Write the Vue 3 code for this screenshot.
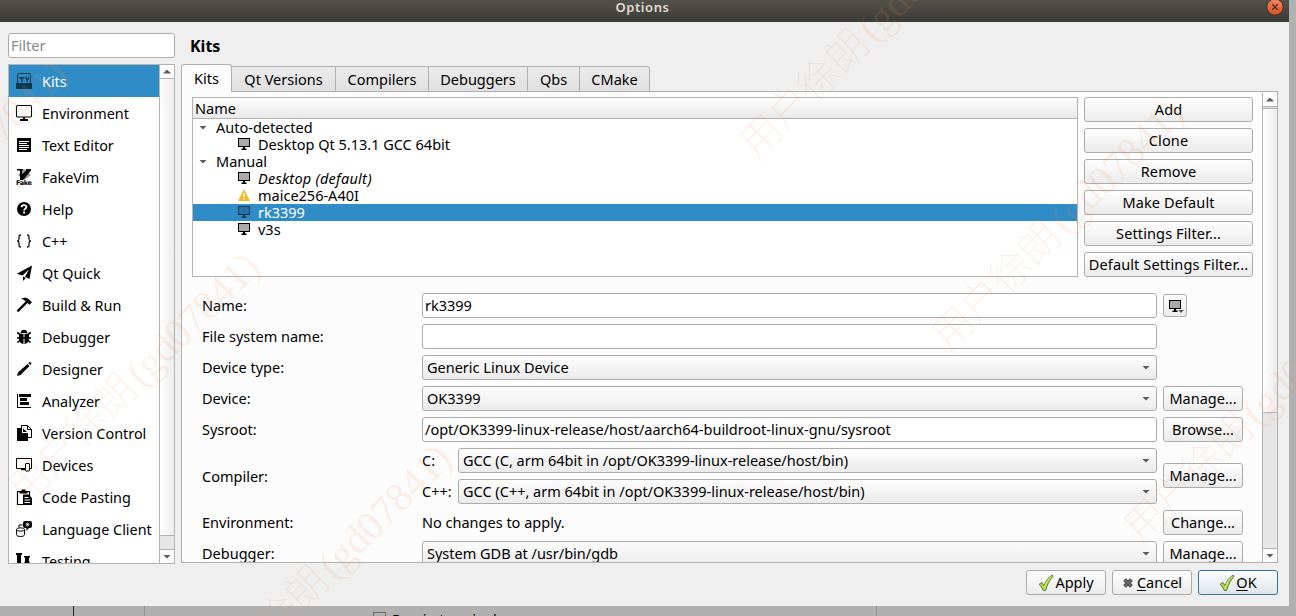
<template>
  <div class="desk">
    <div class="win">
      <header class="title">
        <span>Options</span>
        <svg class="close" width="18" height="18" viewBox="0 0 18 18">
          <defs>
            <linearGradient id="cg" x1="0" y1="0" x2="0" y2="1">
              <stop offset="0" stop-color="#f58463" /><stop offset="1" stop-color="#e2501f" />
            </linearGradient>
          </defs>
          <circle cx="9" cy="9" r="8.2" fill="url(#cg)" stroke="#33312c" />
          <path d="M6.3 6.3l5.4 5.4M11.7 6.3l-5.4 5.4" stroke="#40342c" stroke-width="1.3" />
        </svg>
      </header>

      <div class="body">
        <aside class="side">
          <div class="edit filter">Filter</div>
          <div class="list">
            <ul>
              <li v-for="c in cats" :key="c.t" :class="{ on: c.t === 'Kits' }">
                <svg width="16" height="16" viewBox="0 0 16 16" v-html="c.i"></svg>
                <span>{{ c.t }}</span>
              </li>
            </ul>
            <div class="sbar">
              <div class="sb-btn"><i class="up"></i></div>
              <div class="sb-handle"></div>
              <div class="sb-track short"></div>
              <div class="sb-btn end"><i class="down"></i></div>
            </div>
          </div>
        </aside>

        <section class="page">
          <h1>Kits</h1>
          <nav class="tabs">
            <div v-for="(t, n) in tabs" :key="t" :class="['tab', 't' + n]">{{ t }}</div>
          </nav>
          <div class="pane">
            <div class="scroll">
              <div class="top">
                <div class="tree">
                  <div class="th">Name</div>
                  <div v-for="r in rows" :key="r.t" :class="['row', r.k, { on: r.on }]">
                    <i v-if="r.k === 'group'" class="down"></i>
                    <svg v-else-if="r.k === 'warn'" width="12" height="12" viewBox="0 0 12 12">
                      <path d="M6 0L12 12H0z" fill="#f0bd28" />
                      <path d="M6 4v4M6 9.2v1.2" stroke="#fff" stroke-width="1.4" />
                    </svg>
                    <svg v-else width="12" height="12" viewBox="0 0 12 12" v-html="r.on ? monOn : mon"></svg>
                    <span>{{ r.t }}</span>
                  </div>
                </div>
                <div class="btns">
                  <div v-for="b in btns" :key="b" class="btn">{{ b }}</div>
                </div>
              </div>

              <div class="form">
                <label>Name:</label>
                <div class="edit">rk3399</div>
                <div class="btn pick">
                  <svg width="12" height="12" viewBox="0 0 12 12" v-html="mon"></svg>
                  <i class="down small"></i>
                </div>

                <label>File system name:</label>
                <div class="edit"></div>
                <div></div>

                <label>Device type:</label>
                <div class="combo">Generic Linux Device<i class="down"></i></div>
                <div></div>

                <label>Device:</label>
                <div class="combo">OK3399<i class="down"></i></div>
                <div class="btn">Manage...</div>

                <label>Sysroot:</label>
                <div class="edit path">/opt/OK3399-linux-release/host/aarch64-buildroot-linux-gnu/sysroot</div>
                <div class="btn">Browse...</div>

                <label>Compiler:</label>
                <div class="pair">
                  <span>C:</span>
                  <div class="combo">GCC (C, arm 64bit in /opt/OK3399-linux-release/host/bin)<i class="down"></i></div>
                  <span>C++:</span>
                  <div class="combo">GCC (C++, arm 64bit in /opt/OK3399-linux-release/host/bin)<i class="down"></i></div>
                </div>
                <div class="btn mid">Manage...</div>

                <label>Environment:</label>
                <div class="plain">No changes to apply.</div>
                <div class="btn">Change...</div>

                <label>Debugger:</label>
                <div class="combo">System GDB at /usr/bin/gdb<i class="down"></i></div>
                <div class="btn">Manage...</div>
              </div>
            </div>
            <div class="sbar big">
              <div class="sb-btn"><i class="up"></i></div>
              <div class="sb-gap"></div>
              <div class="sb-handle"></div>
              <div class="sb-track"></div>
              <div class="sb-btn end"><i class="down"></i></div>
            </div>
          </div>
        </section>
      </div>

      <footer class="foot">
        <div class="btn"><svg width="16" height="18" viewBox="0 0 16 18" v-html="tick"></svg>Apply</div>
        <div class="btn">
          <svg class="x" width="12" height="12" viewBox="0 0 14 14">
            <path d="M3 3l8 8M11 3l-8 8" stroke="#4c4c4c" stroke-width="4.6" />
            <path d="M3 3l8 8M11 3l-8 8" stroke="#6c6c6c" stroke-width="1.6" />
          </svg>
          <span><u>C</u>ancel</span>
        </div>
        <div class="btn ok"><svg width="16" height="18" viewBox="0 0 16 18" v-html="tick"></svg><span><u>O</u>K</span></div>
      </footer>
    </div>

    <!-- window underneath, only its top edge shows -->
    <div class="under">
      <div class="u1"></div>
      <div class="u2"></div>
      <div class="u3"><b></b><span>Run in terminal</span></div>
    </div>

    <svg class="mark" width="1296" height="616">
      <text v-for="m in marks" :key="m[0]" :transform="`translate(${m[0]} ${m[1]}) rotate(-45)`">
        <tspan textLength="162">用户徐朗</tspan><tspan class="id" x="166" textLength="169">(gd07841)</tspan>
      </text>
    </svg>
  </div>
</template>

<script setup>
const mon = '<rect x=".5" y=".5" width="11" height="8" fill="#aaa" stroke="#000"/><path d="M5 8.5h2v2h1.5v1.5h-5v-1.5H5z"/>'
const monOn = '<rect x=".5" y=".5" width="11" height="8" fill="#2672a6" stroke="#12394f"/><path fill="#12394f" d="M5 8.5h2v2h1.5v1.5h-5v-1.5H5z"/>'
const tick = '<path d="M1.2 10.2L4 8.4l2 3.4C7.8 7 10.3 3 14.2 1.2L15 2.300C11.5 6 9.2 11 7.6 16.4H5.2C4.2 14 3 12 1.2 10.2z" fill="#b9d63b" stroke="#56802a" stroke-width="1"/><path d="M5.9 14.5C7.5 9.5 10 5 13 2.7" fill="none" stroke="#e2ef96"/>'

// sidebar categories with their 16px glyphs
const cats = [
  { t: 'Kits', i: '<path d="M1.5 10V1.7q0-1.2 1.200-1.200h10.600q1.200 0 1.200 1.200V10" fill="none" stroke="#12394f"/><path fill="#12394f" d="M0 10h16v6H0zM3 4h5.500v1.500H6.500V9H5V5.500H3zM9.500 3.500h1V5h1.500V3.500h1V6l-1 1v2h-1.500V7l-1-1z"/>' },
  { t: 'Environment', i: '<rect x=".5" y=".5" width="15" height="11.500" rx="1.200" fill="none" stroke="#000" stroke-width="1.100"/><path d="M7 12h2v2h3v2H4v-2h3z"/>' },
  { t: 'Text Editor', i: '<path d="M1 1h14v14H1z"/><path d="M3 4.500h10M3 6.500h8M3 8.500h10M3 10.500h10M3 12.500h8" stroke="#fff"/>' },
  { t: 'FakeVim', i: '<path fill="#999" d="M8 0l7 6-7 5-6-5z"/><path d="M1 0h6v1.500H6v4L10 1.500V0h5v1.500L7 11H4V1.500H1z"/><text x="0" y="15.800" font-size="6.500" font-weight="700" textLength="16" font-family="DejaVu Sans">Fake</text>' },
  { t: 'Help', i: '<circle cx="8" cy="8" r="7"/><path d="M5.600 6.200C5.600 3.300 10.400 3.400 10.400 6c0 1.700-2.300 1.700-2.300 3.500M8.100 10.600v1.900" fill="none" stroke="#fff" stroke-width="1.800"/>' },
  { t: 'C++', i: '<path d="M5 2C3 2 3 2.500 3 5S2.800 8 1 8c1.800 0 2 .5 2 3s0 3 2 3M11 2c2 0 2 .5 2 3s.2 3 2 3c-1.800 0-2 .5-2 3s0 3-2 3" fill="none" stroke="#111" stroke-width="1.300"/>' },
  { t: 'Qt Quick', i: '<path d="M16 .5L13.500 14 9 11.800 13 4.500 6.500 10.500.8 8.800zM7 11.500l2.800 1.400L7 16z"/>' },
  { t: 'Build & Run', i: '<path d="M5 1.500C8 .2 11 .6 12.500 2L16 5.300 13.500 7.800 11.500 6 2.200 15.200.6 13.600 9.600 4.500C8.500 3 7 2 5 1.500z"/>' },
  { t: 'Debugger', i: '<path d="M4.500 4C5-.5 11-.5 11.500 4z"/><path d="M3.300 4.800H7.500V15C2.500 14.500 2.500 9 3.300 4.800zM8.500 4.800h4.200c.8 4.200.8 9.700-4.200 10.200z"/><path d="M1.300 3.500L4 5.500M14.700 3.500L12 5.500M1 9h14M1.500 13.500l3-2.500M14.500 13.500l-3-2.500" stroke="#000" stroke-width="1.600"/>' },
  { t: 'Designer', i: '<path d="M1 15l1-3.500L11.500 3 13.500 5 4.500 14zM12.300 2.200L13.800.8 15.600 2.600 14.200 4.100z"/>' },
  { t: 'Analyzer', i: '<path d="M1 1h1v13h13v1H1zM3 1h12v3H3zM4 5h7v3H4zM4 9h9v3H4z"/>' },
  { t: 'Version Control', i: '<path d="M5.500.5h6l4 4V12.500h-10z" fill="#fff" stroke="#000"/><path d="M11.500.5v4h4" fill="none" stroke="#000"/><path d="M1 3h5v5h6v8H1z"/><path d="M7 3.500l4 3.500H7z"/>' },
  { t: 'Devices', i: '<path d="M.5 1.500h15v10H.5z" fill="none" stroke="#000"/><path d="M5 12h4v1.200H5z"/><rect x="9.500" y="6.500" width="4" height="7.500" rx=".5" fill="#fff" stroke="#000"/>' },
  { t: 'Code Pasting', i: '<path d="M1.500 2.500h12v13h-12z" fill="#fff" stroke="#000" stroke-width="1.200"/><path d="M3.500 2h2V.5h4V2h2v2.500h-8zM7 5.500h5.500L16 9v7H7z"/><path d="M8.500 8.500h4M8.500 11h5.500M8.500 13.500h5.500" stroke="#fff"/>' },
  { t: 'Language Client', i: '<path d="M.5 8.500v5c0 2.700 8 2.700 8 0v-5" fill="none" stroke="#000"/><ellipse cx="4.500" cy="8.500" rx="4" ry="1.700" fill="none" stroke="#000"/><rect x="7" y="0" width="9" height="7" rx="2"/><path d="M11 5h4l-5 5z"/><path d="M9.500 3.500h4M11.500 1.500v4M9.800 1.800l3.400 3.400M13.200 1.800L9.800 5.200" stroke="#fff" stroke-width=".6"/><path d="M3 6.500V4h3.500" fill="none" stroke="#000"/>' },
  { t: 'Testing', i: '<path d="M0 0h6v2H5v11H1V2H0zM8 3h6v1.500h-1V8l2 6H7l2-6V4.500H8z"/>' },
]
const tabs = ['Kits', 'Qt Versions', 'Compilers', 'Debuggers', 'Qbs', 'CMake']
const rows = [
  { t: 'Auto-detected', k: 'group' },
  { t: 'Desktop Qt 5.13.1 GCC 64bit', k: 'kit' },
  { t: 'Manual', k: 'group' },
  { t: 'Desktop (default)', k: 'ital' },
  { t: 'maice256-A40I', k: 'warn' },
  { t: 'rk3399', k: 'kit', on: true },
  { t: 'v3s', k: 'kit' },
]
const btns = ['Add', 'Clone', 'Remove', 'Make Default', 'Settings Filter...', 'Default Settings Filter...']
const marks = [[-167, 314], [25, 506], [217, 698], [757, 161], [949, 353], [1141, 545]]
</script>

<style>
body { margin: 0; overflow: hidden; }
</style>

<style scoped>
* { box-sizing: border-box; }
.desk { width: 1296px; height: 616px; background: #b0b0b0; position: relative; overflow: hidden; font: 14.5px/17px "Noto Sans", sans-serif; color: #000; white-space: nowrap; }
.win { width: 1289px; height: 606px; background: #efefef; display: flex; flex-direction: column; }
.title { height: 22px; flex: none; background: linear-gradient(#55524b, #3d3b36); color: #dfdbd2; font-weight: 600; font-size: 13px; letter-spacing: 0.6px; line-height: 14px; text-align: center; padding-right: 4px; position: relative; }
.close { position: absolute; right: 5px; top: -2px; }
.body { display: flex; height: 542px; padding: 11px 11px 0 8px; gap: 6px; }
.side { width: 167px; flex: none; display: flex; flex-direction: column; gap: 6px; }
.edit { height: 25px; border: 1px solid #acacac; border-radius: 3px; background: #fff; padding: 3px 2px; }
.filter { color: #8a8a8a; }
.list { height: 500px; border: 1px solid #b4b4b4; background: #fff; display: flex; overflow: hidden; }
ul { list-style: none; margin: 0; padding: 0; flex: 1; overflow: hidden; }
li { height: 32px; display: flex; align-items: center; padding-left: 7px; gap: 10px; font-size: 14.4px; }
li svg { flex: none; overflow: visible; }
.on { background: #308cc6; color: #fff; }
.sbar { width: 15px; flex: none; border-left: 1px solid #b4b4b4; display: flex; flex-direction: column; background: #e6e6e6; }
.sb-btn { height: 14px; flex: none; background: #fcfcfc; border-bottom: 1px solid #b4b4b4; display: flex; align-items: center; justify-content: center; }
.sb-btn.end { border-bottom: 0; border-top: 1px solid #b4b4b4; }
.sb-handle { flex: 1; background: linear-gradient(90deg, #fff, #ececec); border-bottom: 1px solid #b4b4b4; }
.sb-track.short { height: 13px; }
.up, .down { width: 8px; height: 4px; background: #5a5a5a; flex: none; display: block; }
.up { clip-path: polygon(50% 0, 100% 100%, 0 100%); }
.down { clip-path: polygon(0 0, 100% 0, 50% 100%); }
.down.small { width: 6px; height: 3px; }
.page { width: 1097px; flex: none; display: flex; flex-direction: column; }
h1 { margin: 4px 0 0 9px; font-size: 16px; line-height: 18px; height: 27px; font-weight: 700; }
.tabs { display: flex; align-items: flex-end; height: 28px; margin-bottom: -1px; position: relative; z-index: 1; }
.tab { height: 26px; border: 1px solid #b0b0b0; border-left: 0; background: linear-gradient(#ebebeb, #e0e0e0); text-align: center; line-height: 25px; }
.t0 { width: 51px; height: 28px; border-left: 1px solid #b0b0b0; border-bottom: 0; background: #fcfcfc; border-radius: 3px 3px 0 0; line-height: 26px; }
.t1 { width: 104px; }
.t2 { width: 93px; }
.t3 { width: 99px; }
.t4 { width: 52px; }
.t5 { width: 70px; border-radius: 0 3px 0 0; }
.pane { height: 472px; border: 1px solid #b0b0b0; background: #fcfcfc; display: flex; overflow: hidden; padding-right: 1px; }
.scroll { width: 1080px; flex: none; padding: 5px 9px 0 10px; overflow: hidden; }
.top { display: flex; gap: 6px; }
.tree { width: 886px; height: 180px; border: 1px solid #b4b4b4; background: #fff; }
.th { height: 21px; background: linear-gradient(#fdfdfd, #e9e9e9); border-bottom: 1px solid #b0b0b0; padding: 2px 2px; }
.row { height: 17px; display: flex; align-items: center; padding-left: 45px; gap: 8px; line-height: 17px; }
.row svg { margin-bottom: 2px; }
.row.group { padding-left: 6px; gap: 9px; }
.row.ital { font-style: italic; letter-spacing: 0.25px; }
.btns { width: 169px; display: grid; gap: 6px; align-content: start; }
.btn { height: 25px; border: 1px solid #acacac; border-radius: 3px; background: linear-gradient(#fefefe, #ebebeb); display: flex; align-items: center; justify-content: center; }
.btns .btn { letter-spacing: 0.12px; }
.form { display: grid; grid-template-columns: 214px 735px 80px; grid-template-rows: repeat(5, 25px) 56px 25px 25px; gap: 6px; padding: 16px 0 0 10px; }
.form label { align-self: center; }
.combo { height: 25px; border: 1px solid #acacac; border-radius: 3px; background: linear-gradient(#fdfdfd, #ebebeb); display: flex; align-items: center; justify-content: space-between; padding: 0 6px 0 4px; }
.pair { display: grid; grid-template-columns: 36px 699px; row-gap: 6px; align-items: center; }
.mid { margin-top: 15px; }
.plain { align-self: center; }
.pick { width: 24px; height: 23px; margin-top: 1px; position: relative; }
.pick .small { position: absolute; right: 2px; bottom: 3px; }
.big { margin-top: 1px; }
.big .sb-gap { height: 2px; background: #e0e0e0; border-bottom: 1px solid #b4b4b4; }
.big .sb-handle { flex: none; height: 304px; }
.big .sb-track { flex: 1; }
.foot { display: flex; justify-content: flex-end; gap: 6px; padding: 6px 11px 0 0; }
.foot .btn { width: 80px; }
.foot svg { flex: none; margin-right: 1px; }
.foot .x { margin-right: 3px; }
.ok { border-color: #2f76a3; background: linear-gradient(#fbfcfd, #dfe6ea); }
u { text-underline-offset: 2px; }
.under { display: flex; height: 10px; overflow: hidden; }
.u1 { width: 74px; border-right: 1px solid #222; }
.u2 { width: 71px; border-right: 1px solid #929292; }
.u3 { width: 732px; border-right: 1px solid #929292; display: flex; gap: 6px; padding: 6px 0 0 228px; }
.u3 b { width: 13px; height: 13px; border: 1px solid #6c6c6c; flex: none; }
.u3 span { margin-top: -1px; }
.mark { position: absolute; left: 0; top: 0; pointer-events: none; }
.mark text { font: 100 41px "Liberation Serif", "Noto Sans CJK SC", serif; fill: #f58a50; fill-opacity: 0.17; }
.mark .id { fill-opacity: 0.13; }
</style>
